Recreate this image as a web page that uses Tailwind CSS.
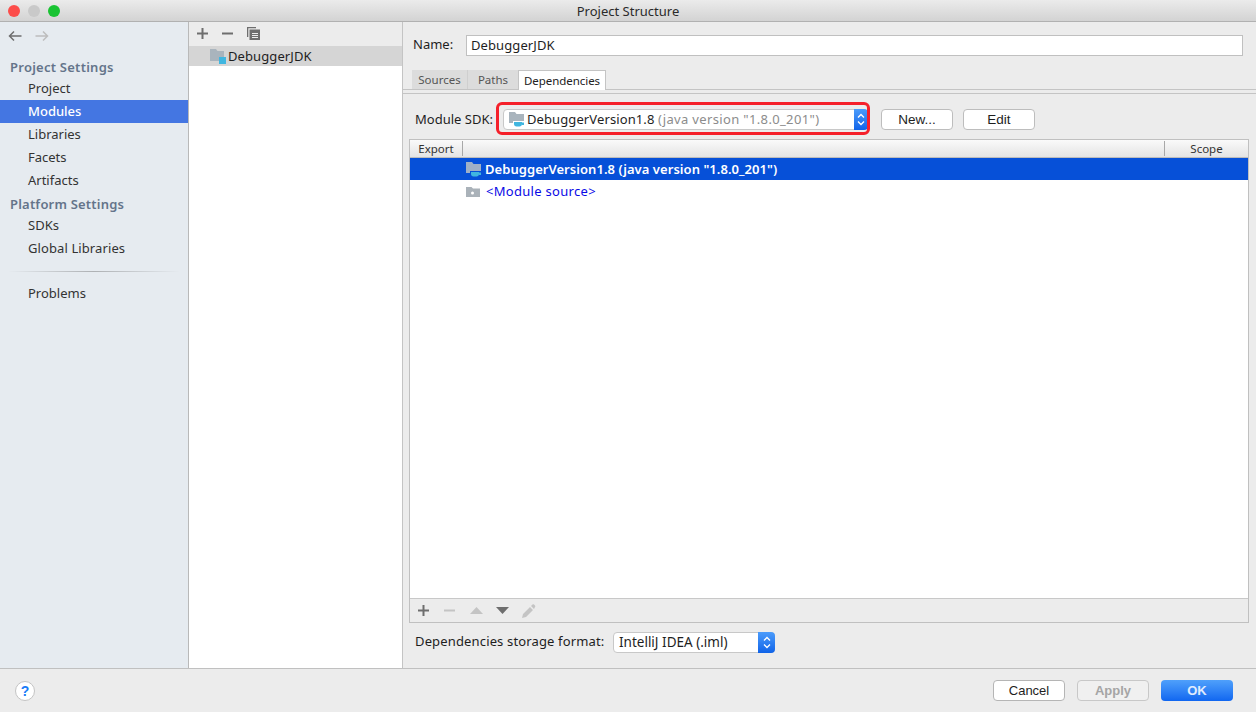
<!DOCTYPE html>
<html><head><meta charset="utf-8"><script src="https://cdn.jsdelivr.net/npm/@tailwindcss/browser@4"></script></head>
<body class="m-0 overflow-hidden bg-[#ececec]">
<div class="w-[1256px] h-[712px] flex flex-col overflow-hidden font-['Noto_Sans','Open_Sans',sans-serif] text-[13px] text-[#1e1e1e] bg-[#ececec]">
  <!-- title bar -->
  <div class="h-[22px] shrink-0 relative flex items-center justify-center pt-px bg-gradient-to-b from-[#ebebeb] to-[#d3d3d3] border-b border-[#b1b1b1]">
    <div class="absolute left-[8px] top-[5px] flex gap-[8px]">
      <div class="w-[12px] h-[12px] rounded-full bg-[#fc4d4a]"></div>
      <div class="w-[12px] h-[12px] rounded-full bg-[#c9c9c9]"></div>
      <div class="w-[12px] h-[12px] rounded-full bg-[#19c332]"></div>
    </div>
    <span class="text-[13px] leading-[21px] text-[#2a2a2a]">Project Structure</span>
  </div>
  <!-- body -->
  <div class="h-[647px] shrink-0 flex border-b border-[#c0c0c0]">
    <!-- sidebar -->
    <div class="w-[189px] shrink-0 bg-[#e6ebf0] border-r border-[#b9b9b9] flex flex-col">
      <div class="h-[28px] flex items-center pl-[8px] gap-[13px]">
        <svg width="14" height="12" viewBox="0 0 14 12" fill="none" stroke="#6e6e6e" stroke-width="1.500"><path d="M13.500 6H1.500M6 1.500L1.500 6L6 10.500"/></svg>
        <svg width="14" height="12" viewBox="0 0 14 12" fill="none" stroke="#bdbdbd" stroke-width="1.500"><path d="M.5 6h12M8 1.500L12.500 6L8 10.500"/></svg>
      </div>
      <div class="mt-[6px] h-[23px] leading-[23px] pl-[10px] font-semibold tracking-[0.25px] text-[#64748a]">Project Settings</div>
      <div class="-mt-[2px] h-[23px] leading-[23px] pl-[28px] text-[#333]">Project</div>
      <div class="h-[23px] leading-[23px] pl-[28px] font-medium text-white bg-[#4476e2]">Modules</div>
      <div class="h-[23px] leading-[23px] pl-[28px] text-[#333]">Libraries</div>
      <div class="h-[23px] leading-[23px] pl-[28px] text-[#333]">Facets</div>
      <div class="h-[23px] leading-[23px] pl-[28px] text-[#333]">Artifacts</div>
      <div class="mt-px h-[23px] leading-[23px] pl-[10px] font-semibold tracking-[0.2px] text-[#64748a]">Platform Settings</div>
      <div class="-mt-[2px] h-[23px] leading-[23px] pl-[28px] text-[#333]">SDKs</div>
      <div class="h-[23px] leading-[23px] pl-[28px] tracking-[0.1px] text-[#333]">Global Libraries</div>
      <div class="h-px mt-[11px] mx-[8px] bg-gradient-to-r from-[#e6ebf0] via-[#aeb1b4] to-[#e6ebf0]"></div>
      <div class="mt-[10px] h-[23px] leading-[23px] pl-[28px] text-[#333]">Problems</div>
    </div>
    <!-- module list -->
    <div class="w-[214px] shrink-0 bg-white border-r border-[#c4c4c4] flex flex-col">
      <div class="h-[24px] pb-[2px] bg-[#ececec] flex items-center pl-[8px] gap-[14px]">
        <svg width="11" height="11" viewBox="0 0 11 11" fill="#6e6e6e"><path d="M4.500 0h2v4.500H11v2H6.500V11h-2V6.500H0v-2h4.500z"/></svg>
        <svg width="11" height="11" viewBox="0 0 11 11" fill="#6e6e6e"><path d="M0 4.500h11v2H0z"/></svg>
        <svg width="13" height="13" viewBox="0 0 13 13" fill="#6e6e6e"><path d="M0 0h9v1.200H1.300V10H0z"/><path fill-rule="evenodd" d="M2.500 2.500H13V13H2.500zM5 6v1h6V6zm0 2v1h6V8zm0 2v1h6v-1z"/></svg>
      </div>
      <div class="h-[20px] bg-[#d5d5d5] flex items-center pl-[21px] gap-[3px]">
        <div class="relative w-[15px] h-[14px]">
          <svg class="absolute left-0 top-0" width="15" height="13" viewBox="0 0 15 13" fill="#a9b4bd"><path d="M0 0h6l1.500 2H14v10H0z"/></svg>
          <div class="absolute right-[-1px] bottom-[-1px] w-[7px] h-[7px] bg-[#40b6e0]"></div>
        </div>
        <span class="text-[13px] tracking-[0.1px] leading-[20px]">DebuggerJDK</span>
      </div>
    </div>
    <!-- right panel -->
    <div class="flex-1 min-w-0 flex flex-col">
      <div class="h-[24px] mt-[11px] flex items-center pl-[10px]">
        <span class="w-[53px]">Name:</span>
        <div class="w-[777px] h-[21px] bg-white border border-[#c0c0c0] pl-[4px] leading-[19px] text-[13px] tracking-[0.1px]">DebuggerJDK</div>
      </div>
      <!-- tabs -->
      <div class="mt-[13px] h-[20px] shrink-0 flex items-start pl-[9px] border-b border-[#c4c4c4]">
        <div class="w-[56px] h-[19px] bg-[#dcdcdc] border-r border-[#cfcfcf] text-center text-[11.500px] leading-[19px] text-[#555]">Sources</div>
        <div class="w-[50px] h-[19px] bg-[#dcdcdc] text-center text-[11.500px] leading-[19px] text-[#555]">Paths</div>
        <div class="w-[88px] h-[20px] bg-white border border-b-0 border-[#c4c4c4] text-center text-[11.500px] tracking-[-0.05px] leading-[19px] text-[#222]">Dependencies</div>
      </div>
      <div class="h-[4px] shrink-0 border-b border-[#c4c4c4]"></div>
      <div class="flex-1 min-h-0 ml-[6px] mr-[7px] flex flex-col">
        <!-- SDK row -->
        <div class="h-[45px] shrink-0 pt-[6px] flex items-center pl-[6px]">
          <span class="w-[88px] text-[13px] whitespace-nowrap">Module SDK:</span>
          <div class="relative w-[365px] h-[21px] bg-white rounded-[4px] border border-[#c8c8c8] flex items-center pl-[5px] gap-[2px]">
            <svg width="16" height="17" viewBox="0 0 16 17" class="shrink-0"><path d="M0 1h6l1.500 2H15v9H0z" fill="#a9b4bd"/><path d="M4 10h11v6H4z" fill="#fff"/><path d="M5 11h8v2c0 1.500-1 2.500-2.500 2.500h-3C6 15.500 5 14.500 5 13zM13 11.500h2V14h-2z" fill="#40b6e0"/></svg>
            <span class="whitespace-nowrap tracking-[0.1px]">DebuggerVersion1.8 <span class="text-[#8c8c8c] tracking-[0.35px]">(java version "1.8.0_201")</span></span>
            <div class="absolute right-[-1px] top-[-1px] bottom-[-1px] w-[14px] rounded-r-[4px] bg-gradient-to-b from-[#4a9bfb] to-[#0f63e8] flex items-center justify-center">
              <svg width="8" height="13" viewBox="0 0 8 13" fill="none" stroke="#fff" stroke-width="1.300"><path d="M1 4.500L4 1.500l3 3M1 8.500l3 3 3-3"/></svg>
            </div>
            <div class="absolute left-[-8px] top-[-8px] w-[374px] h-[33px] border-[3px] border-[#f5202a] rounded-[6px]"></div>
          </div>
          <div class="ml-[13px] w-[72px] h-[21px] bg-white rounded-[4px] border border-[#bdbdbd] text-center text-[13.500px] leading-[19px] font-['Liberation_Sans']">New...</div>
          <div class="ml-[10px] w-[72px] h-[21px] bg-white rounded-[4px] border border-[#bdbdbd] text-center text-[13.500px] leading-[19px] font-['Liberation_Sans']">Edit</div>
        </div>
        <!-- table -->
        <div class="h-[484px] shrink-0 border border-[#c0c0c0] flex flex-col">
          <div class="h-[18px] shrink-0 flex bg-gradient-to-b from-[#fafafa] to-[#e4e4e4] border-b border-[#bcbcbc] text-[11.500px] text-[#333]">
            <div class="w-[53px] h-[15px] mt-px border-r border-[#a8a8a8] text-center leading-[15px]">Export</div>
            <div class="flex-1 border-r border-[#a8a8a8] h-[15px] mt-px"></div>
            <div class="w-[83px] text-center leading-[17px]">Scope</div>
          </div>
          <div class="h-[22px] shrink-0 pt-px bg-[#0650d8] flex items-center pl-[56px] gap-[3px] text-white font-semibold tracking-[0.05px] text-[13px]">
            <svg width="16" height="17" viewBox="0 0 16 17" class="shrink-0"><path d="M0 1h6l1.500 2H15v9H0z" fill="#9fb0c6"/><path d="M4 10h11v6H4z" fill="#0650d8"/><path d="M5 11h8v2c0 1.500-1 2.500-2.500 2.500h-3C6 15.500 5 14.500 5 13zM13 11.500h2V14h-2z" fill="#40b6e0"/></svg>
            <span class="whitespace-nowrap">DebuggerVersion1.8 (java version "1.8.0_201")</span>
          </div>
          <div class="h-[22px] shrink-0 pt-px bg-white flex items-center pl-[56px] gap-[6px] text-[#0a0ae6]">
            <svg width="14" height="12" viewBox="0 0 14 12" class="shrink-0"><path d="M0 1h5.500L7 2.500h7V11H0z" fill="#aab2b9"/><circle cx="6.500" cy="7" r="1.500" fill="#fff"/></svg>
            <span class="tracking-[0.3px]">&lt;Module source&gt;</span>
          </div>
          <div class="flex-1 bg-white"></div>
          <div class="h-[24px] shrink-0 bg-[#ececec] border-t border-[#c8c8c8] flex items-center pl-[8px]">
            <svg width="11" height="11" viewBox="0 0 11 11" fill="#6e6e6e"><path d="M4.500 0h2v4.500H11v2H6.500V11h-2V6.500H0v-2h4.500z"/></svg>
            <svg class="ml-[15px]" width="11" height="11" viewBox="0 0 11 11" fill="#c4c4c4"><path d="M0 4.500h11v2H0z"/></svg>
            <svg class="ml-[15px]" width="13" height="8" viewBox="0 0 13 8" fill="#c4c4c4"><path d="M6.500 0l6.500 7H0z"/></svg>
            <svg class="ml-[13px]" width="13" height="8" viewBox="0 0 13 8" fill="#6e6e6e"><path d="M0 0h13L6.500 7z"/></svg>
            <svg class="ml-[13px]" width="14" height="14" viewBox="0 0 14 14" fill="#c4c4c4"><path d="M0 14l1-4 7-7 3 3-7 7zM9 2l1.500-1.500c.5-.5 1-.5 1.500 0l1 1c.5.5.5 1 0 1.500L12 5z"/></svg>
          </div>
        </div>
        <!-- storage -->
        <div class="h-[45px] shrink-0 pb-[7px] flex items-center pl-[6px]">
          <span class="w-[198px] whitespace-nowrap tracking-[0.15px]">Dependencies storage format:</span>
          <div class="relative w-[162px] h-[21px] bg-white rounded-[4px] border border-[#c8c8c8] pl-[5px] leading-[19px] text-[13.500px]">IntelliJ IDEA (.iml)
            <div class="absolute right-[-1px] top-[-1px] bottom-[-1px] w-[17px] rounded-r-[4px] bg-gradient-to-b from-[#4a9bfb] to-[#0f63e8] flex items-center justify-center">
              <svg width="8" height="13" viewBox="0 0 8 13" fill="none" stroke="#fff" stroke-width="1.300"><path d="M1 4.500L4 1.500l3 3M1 8.500l3 3 3-3"/></svg>
            </div>
          </div>
        </div>
      </div>
    </div>
  </div>
  <!-- footer -->
  <div class="flex-1 flex items-center pl-[15px] pr-[23px] font-['Liberation_Sans']">
    <div class="w-[20px] h-[20px] rounded-full bg-white border border-[#c4c4c4] text-center text-[#1a7cf7] font-bold text-[14px] leading-[18px]">?</div>
    <div class="ml-auto w-[72px] h-[21px] bg-white rounded-[4px] border border-[#b5b5b5] text-center leading-[19px]">Cancel</div>
    <div class="ml-[12px] w-[72px] h-[21px] bg-[#f0f0f0] rounded-[4px] border border-[#c8c8c8] text-center leading-[19px] text-[#a5a5a5] font-semibold">Apply</div>
    <div class="ml-[12px] w-[72px] h-[21px] rounded-[4px] bg-gradient-to-b from-[#4fa0fb] to-[#1066f0] text-center leading-[21px] text-white/85 font-bold">OK</div>
  </div>
</div>
</body></html>
